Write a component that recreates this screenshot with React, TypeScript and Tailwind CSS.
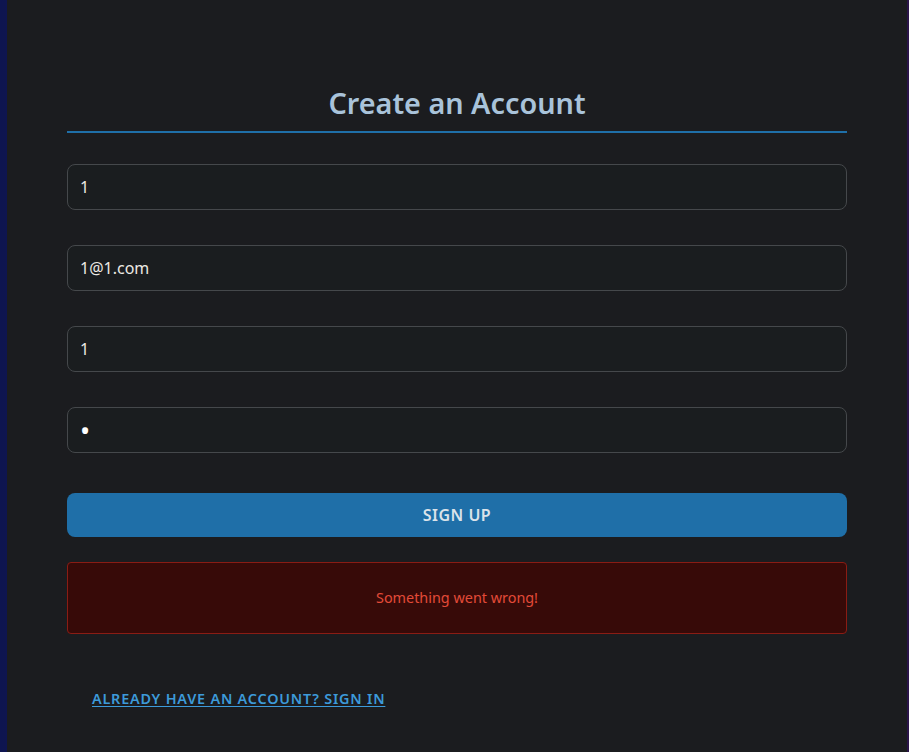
import { useState } from 'react';

export default function App() {
  const [name, setName] = useState('1');
  const [email, setEmail] = useState('1@1.com');
  const [username, setUsername] = useState('1');
  const [password, setPassword] = useState('1');

  const inputCls =
    'w-full h-[46px] rounded-lg border border-[#45484b] bg-[#1a1d1f] px-3 text-base text-[#ece9e4] outline-none';

  return (
    <div
      className="flex h-screen w-full overflow-hidden bg-gradient-to-r from-[#0e1550] to-[#2a1448]"
      style={{ fontFamily: '"Noto Sans", "Open Sans", sans-serif' }}
    >
      <div className="ml-[7px] mr-[2px] flex-1 bg-[#1b1c1f] px-[60px] pt-[82px]">
        {/* Heading */}
        <h1 className="border-b-2 border-[#1f6fa8] pb-[7px] text-center text-[28.8px] font-semibold leading-[42px] text-[#a9c3da]">
          Create an Account
        </h1>

        {/* Form */}
        <form className="mt-[31px] flex flex-col" onSubmit={(e) => e.preventDefault()}>
          <div className="flex flex-col gap-[35px]">
            <input className={inputCls} value={name} onChange={(e) => setName(e.target.value)} />
            <input className={inputCls} value={email} onChange={(e) => setEmail(e.target.value)} />
            <input className={inputCls} value={username} onChange={(e) => setUsername(e.target.value)} />
            <input
              type="password"
              className={`${inputCls} text-[27px] text-white`}
              value={password}
              onChange={(e) => setPassword(e.target.value)}
            />
          </div>

          <button
            type="submit"
            className="mt-[40px] h-[44px] w-full rounded-lg bg-[#1f6fa8] text-base font-semibold uppercase tracking-[0.03em] text-[#dbe3ea]"
          >
            Sign Up
          </button>

          <div className="mt-[25px] flex h-[72px] items-center justify-center rounded border border-[#8a1c14] bg-[#370a08] text-[14.4px] text-[#e34a38]">
            Something went wrong!
          </div>
        </form>

        <div className="mt-[52px] pl-[25px]">
          <a
            href="#"
            className="text-[14.4px] font-semibold uppercase tracking-[0.055em] text-[#3d9ad9] underline underline-offset-2"
          >
            Already have an account? Sign in
          </a>
        </div>
      </div>
    </div>
  );
}
